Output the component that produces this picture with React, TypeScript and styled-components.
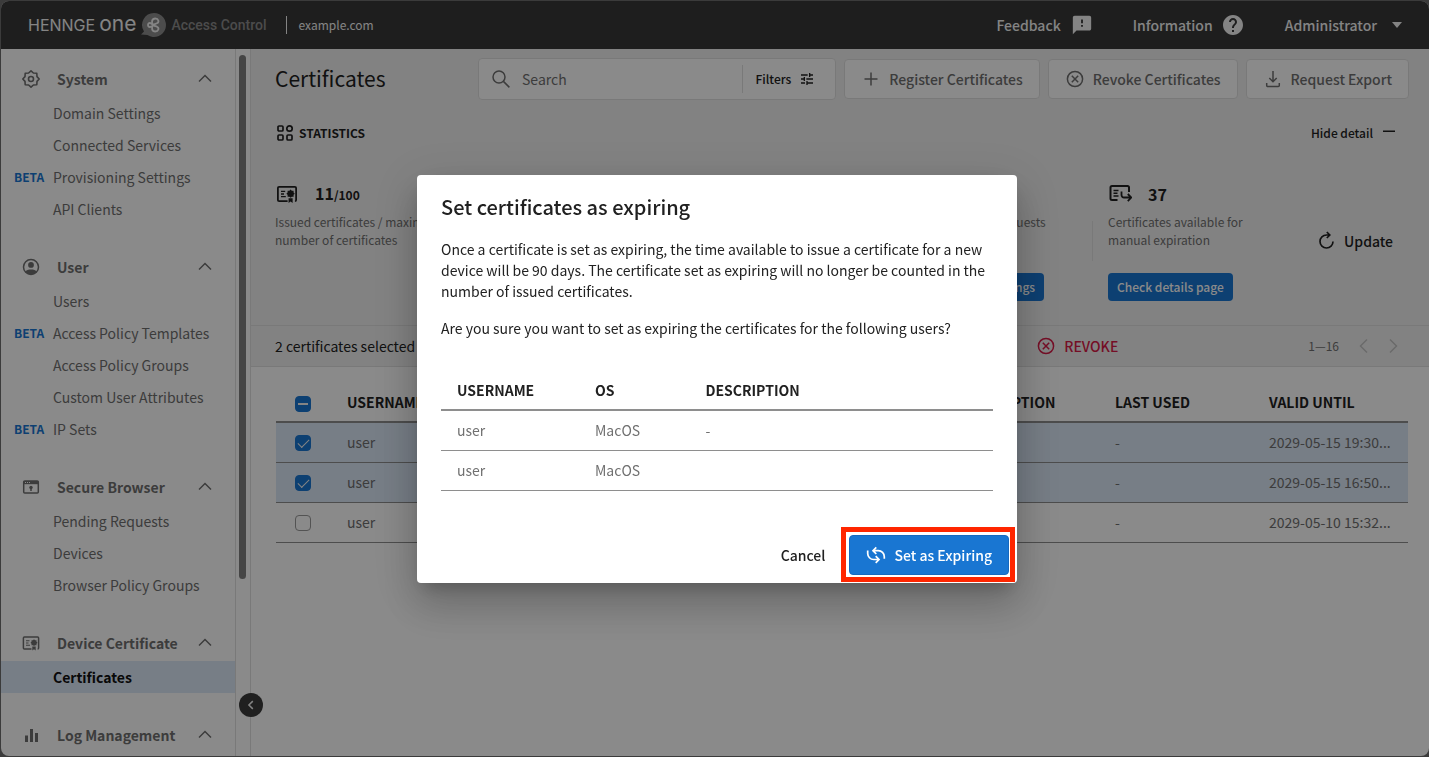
import React from "react";
import styled, { createGlobalStyle, css } from "styled-components";
import { MdFeedback, MdHelp, MdTune } from "react-icons/md";

const color = {
  ink: "#212121",
  muted: "#707070",
  faint: "#999999",
  line: "#e0e0e0",
  rule: "#8e8e8e",
  blue: "#1976d2",
  selected: "#dce9f8",
  red: "#d81b47",
  surface: "#ffffff",
  canvas: "#f1f1f1",
  bar: "#383838",
};

const GlobalStyle = createGlobalStyle`
  * { box-sizing: border-box; }
  body {
    margin: 0;
    background: #6e6e6e;
    color: ${color.ink};
    font-family: "Noto Sans CJK JP", "Noto Sans", sans-serif;
    font-size: 14px;
    line-height: 20px;
  }
  button, input { font: inherit; color: inherit; }
  button { cursor: pointer; }
  h1, h2, p, ul { margin: 0; padding: 0; }
  a { color: inherit; text-decoration: none; }
  svg { display: block; flex: none; }
`;

/* ---------- icons ---------- */

const Icon = styled.svg.attrs({ fill: "none", stroke: "currentColor", "aria-hidden": true })<{ $size?: number }>`
  width: ${(p) => p.$size ?? 20}px;
  height: ${(p) => p.$size ?? 20}px;
`;

const GearIcon = () => (
  <Icon viewBox="0 0 20 20" strokeWidth="1.6" strokeLinejoin="round">
    <path d="M10 1.8 12.4 4 15.8 4.2 16 7.6 18.2 10 16 12.4 15.8 15.8 12.4 16 10 18.2 7.6 16 4.2 15.8 4 12.4 1.8 10 4 7.6 4.2 4.2 7.6 4Z" />
    <circle cx="10" cy="10" r="2.5" />
  </Icon>
);
const UserIcon = () => (
  <Icon viewBox="0 0 20 20" strokeWidth="1.5">
    <circle cx="10" cy="10" r="7.5" />
    <circle cx="10" cy="7.9" r="2.9" fill="currentColor" stroke="none" />
    <path d="M4 14.6c1.2-1.6 3.5-2.2 6-2.2s4.8.6 6 2.2c-1.3 1.8-3.5 2.9-6 2.9s-4.7-1.1-6-2.9Z" fill="currentColor" stroke="none" />
  </Icon>
);
const BrowserIcon = () => (
  <Icon viewBox="0 0 20 20" strokeWidth="1.5">
    <rect x="2.7" y="4" width="14.6" height="12" rx="1" />
    <path d="M2.5 4h15v3.2h-15z" fill="currentColor" stroke="none" />
    <path d="M4 5.5h1M6 5.5h1M8 5.5h1" stroke="#fff" strokeWidth="1" />
    <circle cx="10" cy="10.5" r="1.7" fill="currentColor" stroke="none" />
    <path d="M10 10v4" />
  </Icon>
);
const CertificateIcon = ({ size = 20 }: { size?: number }) => (
  <Icon $size={size} viewBox="0 0 20 20" strokeWidth="1.5">
    <path d="M10.5 16H3.4a1 1 0 0 1-1-1V5a1 1 0 0 1 1-1h13.2a1 1 0 0 1 1 1v10a1 1 0 0 1-1 1" />
    <path d="M5 7.8h3.5M5 10h2.5M5 12.2h4" strokeWidth="1.1" />
    <path d="M13 6.2l1 1h1.5v1.5l1 1-1 1v1.5H14l-1 .9-1-.9h-1.5v-1.5l-1-1 1-1V7.2H12z" fill="currentColor" stroke="none" />
    <path d="M11.3 13.6v3.9l1.7-1.2 1.7 1.2v-3.9z" fill="currentColor" stroke="none" />
  </Icon>
);
const TransferIcon = () => (
  <Icon $size={24} viewBox="0 0 24 24" strokeWidth="2">
    <path d="M9.5 18H4a1.5 1.5 0 0 1-1.5-1.5v-11A1.5 1.5 0 0 1 4 4h15.5a1.5 1.5 0 0 1 1.5 1.5V10" />
    <path d="M5.5 8.5h5M5.5 11.2h4M5.5 13.9h5" strokeWidth="1.5" />
    <path d="M13.5 9.5V13a2.5 2.5 0 0 0 2.5 2.5h7M19.8 12l3.4 3.5-3.4 3.7" strokeWidth="1.8" />
  </Icon>
);
const BarsIcon = () => (
  <Icon viewBox="0 0 20 20" strokeWidth="3">
    <path d="M5.5 17v-6.5M10.5 17V4M15.5 17V8" />
  </Icon>
);
const ChevronIcon = ({ d, size = 20, width = 1.5 }: { d: string; size?: number; width?: number }) => (
  <Icon $size={size} viewBox="0 0 20 20" strokeWidth={width}>
    <path d={d} />
  </Icon>
);
const UP = "M4 12.5 10 6.5l6 6";
const LEFT = "M13 3.5 6.5 10l6.5 6.5";
const RIGHT = "M7 3.5l6.5 6.5L7 16.5";

const SearchIcon = () => (
  <Icon viewBox="0 0 20 20" strokeWidth="1.5">
    <circle cx="8" cy="8" r="6" />
    <path d="m12.4 12.4 6 6" />
  </Icon>
);
const PlusIcon = () => (
  <Icon viewBox="0 0 20 20" strokeWidth="1.5">
    <path d="M10 3.5v13M3.5 10h13" />
  </Icon>
);
const RevokeIcon = () => (
  <Icon viewBox="0 0 20 20" strokeWidth="1.5">
    <circle cx="10" cy="10" r="7.6" />
    <path d="m6.8 6.8 6.4 6.4M13.2 6.8l-6.4 6.4" />
  </Icon>
);
const DownloadIcon = () => (
  <Icon viewBox="0 0 20 20" strokeWidth="1.5">
    <path d="M10 2v10.5M6.3 9 10 12.7 13.7 9M3.7 14v2.5a1 1 0 0 0 1 1h10.6a1 1 0 0 0 1-1V14" />
  </Icon>
);
const GridIcon = () => (
  <Icon $size={18} viewBox="0 0 18 18" strokeWidth="1.7">
    <rect x="2" y="2" width="5" height="5" rx="1" />
    <circle cx="13.5" cy="4.5" r="2.7" />
    <rect x="2" y="11" width="5" height="5" rx="1" />
    <rect x="11" y="11" width="5" height="5" rx="1" />
  </Icon>
);
const MinusIcon = () => (
  <Icon $size={12} viewBox="0 0 12 12" strokeWidth="1.5">
    <path d="M0 4.3h12" />
  </Icon>
);
const RefreshIcon = () => (
  <Icon viewBox="0 0 20 20" strokeWidth="1.7">
    <path d="M17 10.5a6.5 6.5 0 1 1-6.5-6.5h3M10.8 1 13.8 4l-3 3" />
  </Icon>
);
const SyncIcon = () => (
  <Icon viewBox="0 0 20 20" strokeWidth="1.7">
    <path d="M18.3 13.7V11.7A6 6 0 0 0 12.3 5.7H7.2M10.3 2.4 7 5.7 10.3 9" />
    <path d="M1.7 5.5V8.5A6 6 0 0 0 7.7 14.5H12.8M9.7 11.2 13 14.5 9.7 17.8" />
  </Icon>
);
const CaretIcon = () => (
  <Icon $size={10} viewBox="0 0 10 10">
    <path d="M0 2h10L5 8z" fill="currentColor" stroke="none" />
  </Icon>
);
const BrandMark = () => (
  <Icon $size={26} viewBox="0 0 26 26">
    <path d="M14 1a12 12 0 1 1-6.5 22.1L1 22.5l3-3A12 12 0 0 1 14 1Z" fill="#8c8c8c" stroke="none" />
    <g stroke="#f4f4f4" strokeWidth="1.8" strokeLinejoin="round">
      <path d="M13 13c-1.5-2.5-5-2.8-5 0s3.5 2.5 5 0Z" />
      <path d="M13 13c-2-3-1-6.5 2.3-6.5s4.2 3.5 1.7 4.7c-1.5.7-3 .8-4 1.8Z" />
      <path d="M13 13c-2 3-1 6.5 2.3 6.5s4.2-3.5 1.7-4.7c-1.5-.7-3-.8-4-1.8Z" />
    </g>
  </Icon>
);

/* ---------- shell ---------- */

const Shell = styled.div`
  display: flex;
  flex-direction: column;
  height: calc(100vh - 2px);
  margin: 1px 0 1px 1px;
  border-radius: 8px;
  overflow: hidden;
  background: ${color.surface};
`;

const TopBar = styled.header`
  flex: none;
  display: flex;
  align-items: center;
  height: 48px;
  padding: 0 27px;
  background: ${color.bar};
  color: #f4f4f4;
`;
const Brand = styled.a`
  display: flex;
  align-items: center;
  gap: 4px;
`;
const BrandName = styled.span`
  display: flex;
  align-items: baseline;
  gap: 4px;
  font-family: Inter, sans-serif;
  font-size: 16px;
`;
const BrandOne = styled.span`
  font-size: 21px;
  line-height: 16px;
`;
const Product = styled.span`
  margin-left: 1px;
  font-family: Roboto, sans-serif;
  font-size: 14px;
  font-weight: 500;
  color: #8c8c8c;
`;
const Domain = styled.span`
  margin-left: 19px;
  padding-left: 12px;
  border-left: 1px solid #f4f4f4;
  font-size: 12px;
  line-height: 18px;
`;
const TopActions = styled.nav`
  display: flex;
  align-items: center;
  gap: 40px;
  margin-left: auto;
`;
const TopAction = styled.button<{ $gap?: number }>`
  display: flex;
  align-items: center;
  gap: ${(p) => p.$gap ?? 8}px;
  padding: 0;
  border: 0;
  background: none;
  font-weight: 500;
`;

const Body = styled.div`
  flex: 1;
  display: flex;
  min-height: 0;
`;

/* ---------- sidebar ---------- */

const Sidebar = styled.aside`
  position: relative;
  flex: none;
  display: flex;
  width: 250px;
  border-right: 1px solid ${color.line};
`;
const Menu = styled.nav`
  display: flex;
  flex-direction: column;
  gap: 23px;
  width: 235px;
  padding-top: 11px;
  overflow: hidden;
  border-right: 1px solid ${color.line};
  color: ${color.muted};
`;
const ScrollThumb = styled.div`
  width: 7px;
  height: 524px;
  margin: 6px 3px;
  border-radius: 4px;
  background: #808080;
`;
const MenuSection = styled.section`
  flex: none;
`;
const MenuHeading = styled.button`
  display: flex;
  align-items: center;
  width: 100%;
  height: 38px;
  padding: 0 20px;
  border: 0;
  background: none;
  font-size: 14px;
  font-weight: 700;
`;
const MenuTitle = styled.span`
  flex: 1;
  margin-left: 16px;
  text-align: left;
`;
const MenuList = styled.ul`
  margin-top: -1px;
  list-style: none;
`;
const MenuItem = styled.a<{ $active?: boolean }>`
  display: flex;
  align-items: center;
  height: 32px;
  padding-left: 13px;
  ${(p) =>
    p.$active &&
    css`
      background: ${color.selected};
      color: #111111;
      font-weight: 700;
    `}
`;
const Beta = styled.span`
  width: 39px;
  font-size: 12px;
  font-weight: 700;
  color: ${color.blue};
`;
const Collapse = styled.button`
  position: absolute;
  right: -13px;
  bottom: 39px;
  display: grid;
  place-items: center;
  width: 24px;
  height: 24px;
  padding: 0;
  border: 0;
  border-radius: 50%;
  background: #3c3c3c;
  color: #f4f4f4;
`;

/* ---------- main ---------- */

const Main = styled.main`
  flex: 1;
  min-width: 0;
`;
const Summary = styled.div`
  padding: 9px 20px 24px 24px;
  background: ${color.canvas};
`;
const Toolbar = styled.div`
  display: flex;
  align-items: center;
  gap: 8px;
`;
const PageTitle = styled.h1`
  width: 195px;
  padding-bottom: 2px;
  font-size: 21px;
  font-weight: 400;
  line-height: 32px;
`;
const SearchBox = styled.div`
  flex: 1;
  display: flex;
  align-items: center;
  min-width: 0;
  height: 42px;
  padding-left: 12px;
  border: 1px solid ${color.line};
  border-radius: 4px;
  background: ${color.surface};
  color: ${color.muted};
`;
const SearchInput = styled.input`
  flex: 1;
  min-width: 0;
  padding: 0 0 0 11px;
  border: 0;
  outline: 0;
  background: none;
  &::placeholder { color: ${color.muted}; opacity: 1; }
`;
const Filters = styled.button`
  display: flex;
  align-items: center;
  gap: 8px;
  height: 28px;
  padding: 0 20px 0 13px;
  border: 0;
  border-left: 1px solid ${color.line};
  background: none;
  color: ${color.ink};
  font-size: 12px;
  font-weight: 500;
`;
const ToolButton = styled.button`
  display: flex;
  align-items: center;
  gap: 8px;
  height: 40px;
  padding: 0 16px;
  border: 1px solid ${color.line};
  border-radius: 4px;
  background: ${color.surface};
  color: ${color.muted};
  font-weight: 500;
  white-space: nowrap;
`;
const StatsHeader = styled.div`
  display: flex;
  align-items: center;
  margin: 23px 14px 41px 1px;
  font-size: 12px;
`;
const StatsTitle = styled.h2`
  flex: 1;
  display: flex;
  align-items: center;
  gap: 5px;
  font-size: 12px;
  font-weight: 700;
`;
const HideDetail = styled.button`
  display: flex;
  align-items: center;
  gap: 10px;
  padding: 0;
  border: 0;
  background: none;
  font-weight: 500;
`;
const Stats = styled.div`
  display: flex;
  align-items: flex-start;
`;
const Stat = styled.div<{ $width?: number }>`
  ${(p) => (p.$width ? `flex: none; width: ${p.$width}px;` : "flex: 1;")}
`;
const StatDivider = styled.div`
  width: 1px;
  height: 40px;
  margin: 37px 15px 0 0;
  background: ${color.line};
`;
const StatValue = styled.div`
  display: flex;
  align-items: center;
  gap: 16px;
  height: 20px;
  font-size: 16px;
  font-weight: 700;
`;
const StatTotal = styled.span`
  font-size: 12px;
`;
const StatText = styled.p`
  height: 40px;
  margin: 9px 0 20px;
  font-size: 12px;
  line-height: 18px;
  color: ${color.muted};
`;
const SmallButton = styled.button`
  display: block;
  height: 28px;
  padding: 0 9px;
  border: 0;
  border-radius: 4px;
  background: ${color.blue};
  color: #ffffff;
  font-size: 12px;
  font-weight: 500;
`;
const Update = styled.button`
  display: flex;
  align-items: center;
  gap: 8px;
  margin: 47px 16px 0 0;
  padding: 0;
  border: 0;
  background: none;
  font-weight: 500;
`;

const SelectionBar = styled.div`
  display: flex;
  align-items: center;
  height: 42px;
  padding: 0 26px 0 24px;
  border: 1px solid ${color.line};
  border-width: 1px 0;
  background: ${color.canvas};
`;
const RevokeAction = styled.button`
  display: flex;
  align-items: center;
  gap: 8px;
  margin: 0 190px 0 auto;
  padding: 0;
  border: 0;
  background: none;
  color: ${color.red};
  font-weight: 500;
`;
const Pager = styled.div`
  display: flex;
  align-items: center;
  gap: 9px;
  font-size: 12px;
  color: ${color.muted};
`;
const PagerRange = styled.span`
  margin-right: 6px;
`;
const PagerButton = styled.button`
  padding: 0;
  border: 0;
  background: none;
  color: #c4c4c4;
`;

const TableArea = styled.div`
  padding: 16px 21px 0 25px;
`;
const Table = styled.table`
  width: 100%;
  table-layout: fixed;
  border-collapse: separate;
  border-spacing: 0;
`;
const Th = styled.th<{ $width?: string }>`
  width: ${(p) => p.$width ?? "auto"};
  height: 40px;
  padding: 0 16px;
  border-bottom: 2px solid ${color.rule};
  font-weight: 700;
  text-align: left;
`;
const Td = styled.td`
  height: 40px;
  padding: 0 16px 2px;
  border-bottom: 1px solid ${color.rule};
  color: ${color.muted};
  white-space: nowrap;
`;
const Row = styled.tr<{ $selected?: boolean }>`
  background: ${(p) => (p.$selected ? color.selected : "transparent")};
`;
const Check = styled.input.attrs({ type: "checkbox" })<{ $partial?: boolean }>`
  appearance: none;
  display: grid;
  place-items: center;
  width: 16px;
  height: 16px;
  margin: 3px 0 0 3px;
  border: 1px solid ${color.faint};
  border-radius: 4px;
  ${(p) =>
    (p.checked || p.$partial) &&
    css`
      border-color: ${color.blue};
      background: ${color.blue};
    `}
  &::after {
    content: "";
    ${(p) =>
      p.$partial
        ? css`
            width: 10px;
            height: 2px;
            background: #f4f4f4;
          `
        : p.checked &&
          css`
            width: 10px;
            height: 5px;
            margin-bottom: 3px;
            border: solid #f4f4f4;
            border-width: 0 0 1px 1px;
            transform: rotate(-45deg);
          `}
  }
`;

/* ---------- dialog ---------- */

const Backdrop = styled.div`
  position: fixed;
  inset: 0;
  display: flex;
  align-items: center;
  justify-content: center;
  padding: 1px 0 0 5px;
  background: rgba(0, 0, 0, 0.46);
`;
const Dialog = styled.section`
  width: 600px;
  border-radius: 4px;
  background: ${color.surface};
  box-shadow: 0 11px 15px -7px rgba(0, 0, 0, 0.2), 0 24px 38px 3px rgba(0, 0, 0, 0.14),
    0 9px 46px 8px rgba(0, 0, 0, 0.12);
`;
const DialogBody = styled.div`
  display: flex;
  flex-direction: column;
  gap: 16px;
  padding: 16px 24px 0;
`;
const DialogTitle = styled.h2`
  font-size: 20px;
  font-weight: 500;
  line-height: 32px;
`;
const DialogText = styled.p`
  line-height: 21px;
`;
const DialogTable = styled(Table)`
  margin-top: 16px;
`;
const DialogActions = styled.div`
  display: flex;
  align-items: center;
  justify-content: flex-end;
  gap: 24px;
  padding: 44px 8px 8px;
`;
const CancelButton = styled.button`
  padding: 0;
  border: 0;
  background: none;
  font-weight: 500;
`;
const Highlight = styled.div`
  position: relative;
  &::after {
    content: "";
    position: absolute;
    inset: -8px -6px -7px -8px;
    border: 5px solid #ff2600;
    pointer-events: none;
  }
`;
const PrimaryButton = styled.button`
  display: flex;
  align-items: center;
  gap: 8px;
  height: 40px;
  padding: 0 16px;
  border: 1px solid #1669bf;
  border-radius: 4px;
  background: ${color.blue};
  color: #ffffff;
  font-weight: 500;
`;

/* ---------- data ---------- */

type Item = { label: string; beta?: boolean; active?: boolean };
const sections: { title: string; icon: React.ReactNode; items: Item[] }[] = [
  {
    title: "System",
    icon: <GearIcon />,
    items: [
      { label: "Domain Settings" },
      { label: "Connected Services" },
      { label: "Provisioning Settings", beta: true },
      { label: "API Clients" },
    ],
  },
  {
    title: "User",
    icon: <UserIcon />,
    items: [
      { label: "Users" },
      { label: "Access Policy Templates", beta: true },
      { label: "Access Policy Groups" },
      { label: "Custom User Attributes" },
      { label: "IP Sets", beta: true },
    ],
  },
  {
    title: "Secure Browser",
    icon: <BrowserIcon />,
    items: [{ label: "Pending Requests" }, { label: "Devices" }, { label: "Browser Policy Groups" }],
  },
  { title: "Device Certificate", icon: <CertificateIcon />, items: [{ label: "Certificates", active: true }] },
  { title: "Log Management", icon: <BarsIcon />, items: [] },
];

const certificates = [
  { user: "user", until: "2029-05-15 19:30...", selected: true },
  { user: "user", until: "2029-05-15 16:50...", selected: true },
  { user: "user", until: "2029-05-10 15:32...", selected: false },
];

const expiring = [
  { user: "user", os: "MacOS", description: "-" },
  { user: "user", os: "MacOS", description: "" },
];

export default function App() {
  return (
    <>
      <GlobalStyle />
      <Shell>
        <TopBar>
          <Brand href="#">
            <BrandName>
              HENNGE <BrandOne>one</BrandOne>
            </BrandName>
            <BrandMark />
            <Product>Access Control</Product>
          </Brand>
          <Domain>example.com</Domain>
          <TopActions>
            <TopAction $gap={10}>
              Feedback <MdFeedback size={22} />
            </TopAction>
            <TopAction>
              Information <MdHelp size={24} />
            </TopAction>
            <TopAction $gap={15}>
              Administrator <CaretIcon />
            </TopAction>
          </TopActions>
        </TopBar>

        <Body>
          <Sidebar>
            <Menu>
              {sections.map((s) => (
                <MenuSection key={s.title}>
                  <MenuHeading>
                    {s.icon}
                    <MenuTitle>{s.title}</MenuTitle>
                    <ChevronIcon d={UP} />
                  </MenuHeading>
                  <MenuList>
                    {s.items.map((i) => (
                      <li key={i.label}>
                        <MenuItem href="#" $active={i.active}>
                          <Beta>{i.beta && "BETA"}</Beta>
                          {i.label}
                        </MenuItem>
                      </li>
                    ))}
                  </MenuList>
                </MenuSection>
              ))}
            </Menu>
            <ScrollThumb />
            <Collapse aria-label="Collapse menu">
              <ChevronIcon d={LEFT} size={12} width={2.5} />
            </Collapse>
          </Sidebar>

          <Main>
            <Summary>
              <Toolbar>
                <PageTitle>Certificates</PageTitle>
                <SearchBox>
                  <SearchIcon />
                  <SearchInput placeholder="Search" aria-label="Search" />
                  <Filters>
                    Filters <MdTune size={16} />
                  </Filters>
                </SearchBox>
                <ToolButton>
                  <PlusIcon /> Register Certificates
                </ToolButton>
                <ToolButton>
                  <RevokeIcon /> Revoke Certificates
                </ToolButton>
                <ToolButton>
                  <DownloadIcon /> Request Export
                </ToolButton>
              </Toolbar>

              <StatsHeader>
                <StatsTitle>
                  <GridIcon /> STATISTICS
                </StatsTitle>
                <HideDetail>
                  Hide detail <MinusIcon />
                </HideDetail>
              </StatsHeader>

              <Stats>
                <Stat>
                  <StatValue>
                    <CertificateIcon size={24} />
                    <span>
                      11<StatTotal>/100</StatTotal>
                    </span>
                  </StatValue>
                  <StatText>
                    Issued certificates / maximum
                    <br />
                    number of certificates
                  </StatText>
                </Stat>
                <Stat $width={170}>
                  <StatValue />
                  <StatText>Unprocessed requests</StatText>
                  <SmallButton>Reminder settings</SmallButton>
                </Stat>
                <StatDivider />
                <Stat $width={208}>
                  <StatValue>
                    <TransferIcon /> 37
                  </StatValue>
                  <StatText>
                    Certificates available for
                    <br />
                    manual expiration
                  </StatText>
                  <SmallButton>Check details page</SmallButton>
                </Stat>
                <Update>
                  <RefreshIcon /> Update
                </Update>
              </Stats>
            </Summary>

            <SelectionBar>
              <span>2 certificates selected</span>
              <RevokeAction>
                <RevokeIcon /> REVOKE
              </RevokeAction>
              <Pager>
                <PagerRange>1—16</PagerRange>
                <PagerButton aria-label="Previous page">
                  <ChevronIcon d={LEFT} />
                </PagerButton>
                <PagerButton aria-label="Next page">
                  <ChevronIcon d={RIGHT} />
                </PagerButton>
              </Pager>
            </SelectionBar>

            <TableArea>
              <Table>
                <thead>
                  <tr>
                    <Th $width="55px">
                      <Check $partial aria-label="Select all certificates" />
                    </Th>
                    <Th>USERNAME</Th>
                    <Th $width="154px">DESCRIPTION</Th>
                    <Th $width="154px">LAST USED</Th>
                    <Th $width="155px">VALID UNTIL</Th>
                  </tr>
                </thead>
                <tbody>
                  {certificates.map((c) => (
                    <Row key={c.until} $selected={c.selected}>
                      <Td>
                        <Check checked={c.selected} readOnly aria-label={`Select certificate valid until ${c.until}`} />
                      </Td>
                      <Td>{c.user}</Td>
                      <Td />
                      <Td>-</Td>
                      <Td>{c.until}</Td>
                    </Row>
                  ))}
                </tbody>
              </Table>
            </TableArea>
          </Main>
        </Body>
      </Shell>

      <Backdrop>
        <Dialog role="dialog" aria-modal="true" aria-labelledby="dialog-title">
          <DialogBody>
            <DialogTitle id="dialog-title">Set certificates as expiring</DialogTitle>
            <DialogText>
              Once a certificate is set as expiring, the time available to issue a certificate for a new device will be
              90 days. The certificate set as expiring will no longer be counted in the number of issued certificates.
            </DialogText>
            <DialogText>
              Are you sure you want to set as expiring the certificates for the following users?
            </DialogText>
            <DialogTable>
              <thead>
                <tr>
                  <Th $width="25%">USERNAME</Th>
                  <Th $width="20%">OS</Th>
                  <Th>DESCRIPTION</Th>
                </tr>
              </thead>
              <tbody>
                {expiring.map((e, i) => (
                  <Row key={i}>
                    <Td>{e.user}</Td>
                    <Td>{e.os}</Td>
                    <Td>{e.description}</Td>
                  </Row>
                ))}
              </tbody>
            </DialogTable>
          </DialogBody>
          <DialogActions>
            <CancelButton>Cancel</CancelButton>
            <Highlight>
              <PrimaryButton>
                <SyncIcon /> Set as Expiring
              </PrimaryButton>
            </Highlight>
          </DialogActions>
        </Dialog>
      </Backdrop>
    </>
  );
}
